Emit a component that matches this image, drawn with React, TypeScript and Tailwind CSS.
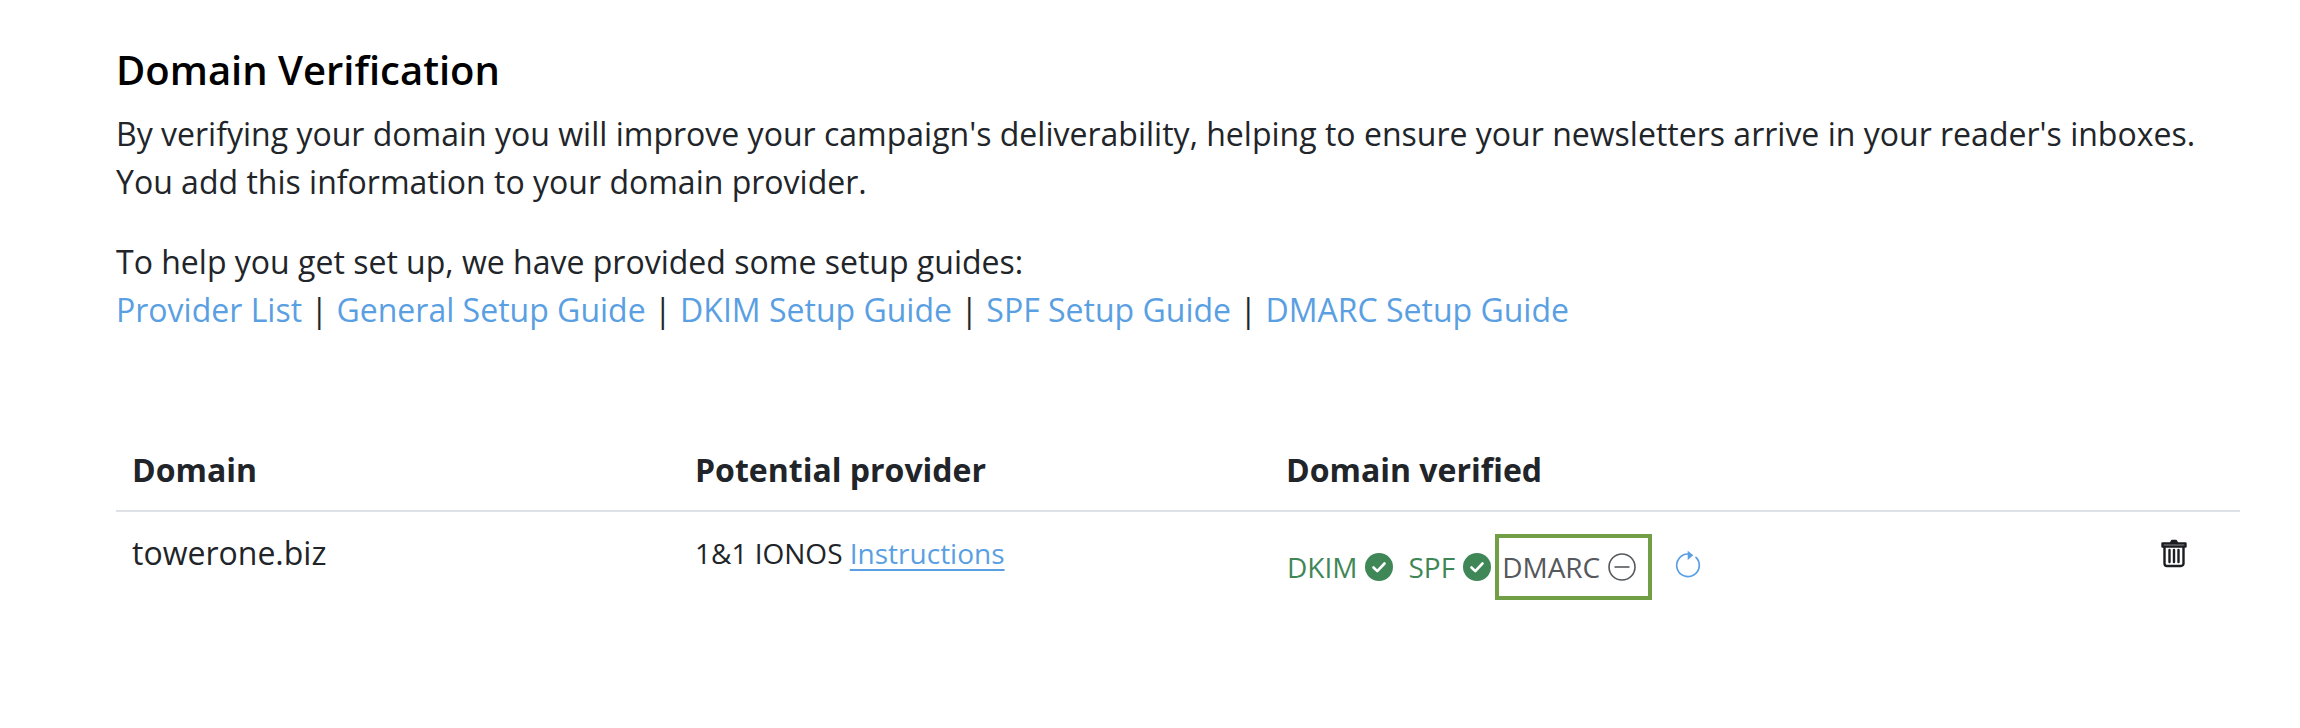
const linkClass = 'text-[#5b9fe3]';

function CheckBadge() {
  return (
    <svg className="w-7 h-7 shrink-0" viewBox="0 0 28 28">
      <circle cx="14" cy="14" r="14" fill="#3f8757" />
      <path d="M8.5 14.5l3.8 3.6 7.2-7.6" fill="none" stroke="#fff" strokeWidth="2.6" strokeLinecap="round" strokeLinejoin="round" />
    </svg>
  );
}

function Sep() {
  return <span className="mx-[8.4px]">|</span>;
}

export default function App() {
  return (
    <div className="w-[2300px] h-[728px] bg-white font-['Open_Sans',sans-serif] text-[#212529] overflow-hidden pt-[42px] pl-[116px]">
      <h1 className="text-[40px] leading-[56px] font-semibold text-black">Domain Verification</h1>
      <p className="mt-[12px] text-[32.02px] leading-[48px]">
        By verifying your domain you will improve your campaign's deliverability, helping to ensure your newsletters arrive in your reader's inboxes.
        <br />
        You add this information to your domain provider.
      </p>
      <p className="mt-[32px] text-[32.02px] leading-[48px]">
        To help you get set up, we have provided some setup guides:
        <br />
        <a className={linkClass}>Provider List</a>
        <Sep />
        <a className={linkClass}>General Setup Guide</a>
        <Sep />
        <a className={linkClass}>DKIM Setup Guide</a>
        <Sep />
        <a className={linkClass}>SPF Setup Guide</a>
        <Sep />
        <a className={linkClass}>DMARC Setup Guide</a>
      </p>

      <div className="mt-[94px] w-[2124px]">
        <div className="flex items-center h-[84px] pt-[2px] border-b-2 border-[#dee2e6] text-[32px] font-bold">
          <div className="w-[579px] pl-[16px]">Domain</div>
          <div className="w-[591px]">Potential provider</div>
          <div>Domain verified</div>
        </div>
        <div className="flex items-start pt-[19px]">
          <div className="w-[579px] pl-[16px] text-[32px] leading-[44px]">towerone.biz</div>
          <div className="w-[591px] text-[28px] leading-[44px]">
            1&amp;1 IONOS <a className={`${linkClass} underline underline-offset-[5px]`}>Instructions</a>
          </div>
          <div className="flex items-center ml-[1px] mt-[3px] text-[28px] leading-[40px] text-[#3f8757]">
            <span>DKIM</span>
            <span className="ml-[8px]"><CheckBadge /></span>
            <span className="ml-[15px]">SPF</span>
            <span className="ml-[8px]"><CheckBadge /></span>
            <div className="ml-[4px] flex items-center h-[66px] w-[157px] border-[4px] border-[#719f45] pl-[3px] text-[#55585c]">
              <span>DMARC</span>
              <svg className="ml-[8px] w-7 h-7" viewBox="0 0 28 28" fill="none" stroke="#55585c" strokeWidth="1.6">
                <circle cx="14" cy="14" r="13" />
                <path d="M6.5 14h15" />
              </svg>
            </div>
            <svg className="ml-[22px] mb-[7px] w-7 h-[30px]" viewBox="0 0 28 30" fill="none" stroke="#5b9fe3" strokeWidth="1.7">
              <path d="M13.7 5A11.3 11.3 0 1 0 22 8.3" strokeLinecap="round" />
              <path d="M13.7 1.7l5.6 4.6-5.6 4.7z" fill="#5b9fe3" stroke="none" />
            </svg>
          </div>
          <div className="ml-auto mr-[52px] mt-[7px]">
            <svg className="w-7 h-[30px]" viewBox="0 0 28 30" fill="none" stroke="#1a1d21" strokeWidth="2.4" strokeLinecap="round" strokeLinejoin="round">
              <path d="M2.5 5.5h23v3h-23z" />
              <path d="M11 5l1-2h4l1 2" fill="#1a1d21" />
              <path d="M4.5 9v16.5a2.5 2.5 0 0 0 2.5 2.5h14a2.5 2.5 0 0 0 2.5-2.5V9" />
              <path d="M9.5 12v12M14 12v12M18.5 12v12" />
            </svg>
          </div>
        </div>
      </div>
    </div>
  );
}
